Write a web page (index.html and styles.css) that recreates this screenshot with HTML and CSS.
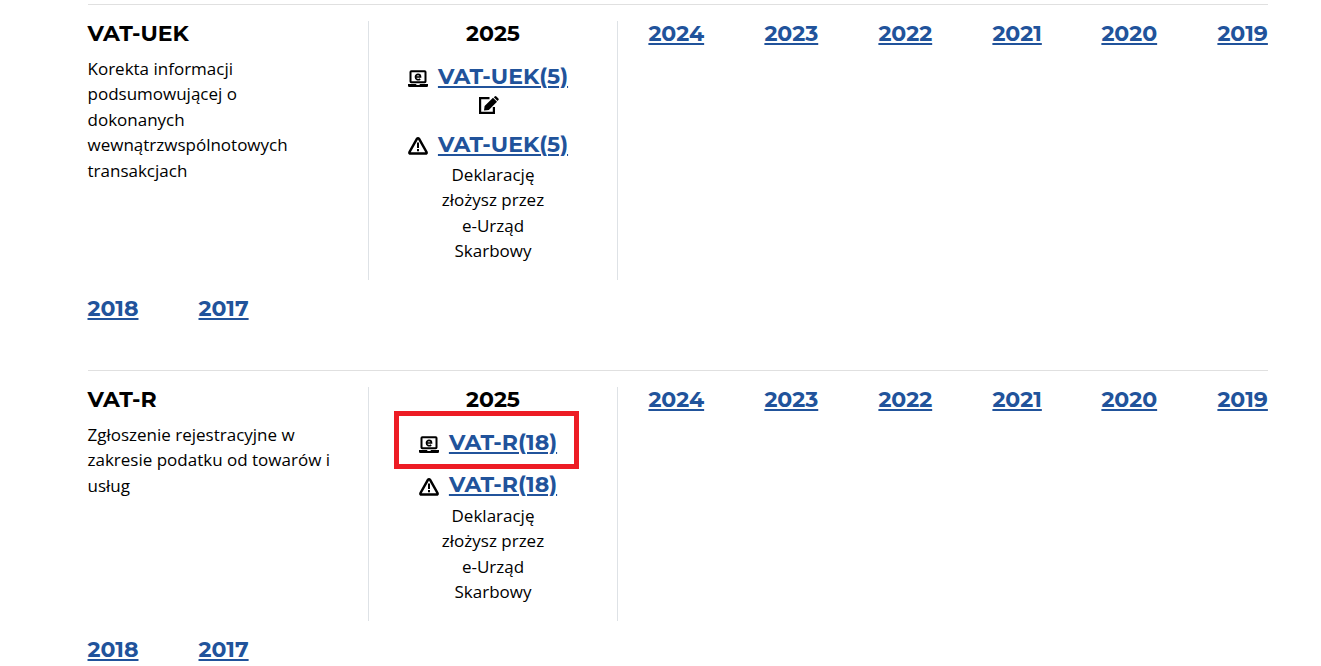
FILE: index.html
```html
<!DOCTYPE html>
<html lang="pl">
<head>
  <meta charset="UTF-8">
  <meta name="viewport" content="width=device-width, initial-scale=1.0">
  <title>Formularze VAT</title>
  <link rel="stylesheet" href="styles.css">
</head>
<body>
  <!-- Shared icons -->
  <svg class="sprite" aria-hidden="true">
    <symbol id="icon-laptop" viewBox="0 0 20 18">
      <rect x="2.500" y="1.300" width="15" height="11" rx=".8" fill="none" stroke="currentColor" stroke-width="2"/>
      <path d="M0 14h8l.6 1h2.800l.6-1h8v1.700q0 1.300-1.200 1.300H1.200Q0 17 0 15.700z" fill="currentColor"/>
      <path d="M7.500 7h5c0-3.400-5-3.400-5 0 0 3 3 3.300 4.700 2" fill="none" stroke="currentColor" stroke-width="1.700"/>
    </symbol>
    <symbol id="icon-warning" viewBox="0 0 20 18">
      <path d="M8.900 1.900Q10 .7 11.100 1.900L18.500 15q.5 1.600-1.100 1.600H2.600Q1 16.600 1.500 15z" fill="none" stroke="currentColor" stroke-width="2.500" stroke-linejoin="round"/>
      <path d="M9 5.500h2v5.500H9zM9 12h2v2.200H9z" fill="currentColor"/>
    </symbol>
    <symbol id="icon-edit" viewBox="0 0 20 18">
      <path d="M10.500 2.200H1.100v14.600h13.800V11" fill="none" stroke="currentColor" stroke-width="2.200"/>
      <path d="M5.600 10 14 1.800l4 3.900-8.200 8.200-4.800.7zM14.800 1.200 15.700.4q.8-.7 1.700 0l2 2q.7.800 0 1.600l-.9.900z" fill="currentColor"/>
    </symbol>
  </svg>

  <main class="forms">
    <section class="form-row">
      <div class="form-main">
        <div class="form-info">
          <h2>VAT-UEK</h2>
          <p>Korekta informacji podsumowującej o dokonanych wewnątrzwspólnotowych transakcjach</p>
        </div>
        <div class="form-current">
          <h3>2025</h3>
          <div class="form-entry">
            <svg class="icon icon-laptop"><use href="#icon-laptop"/></svg>
            <a href="#">VAT-UEK(5)</a>
          </div>
          <div class="form-edit"><svg class="icon"><use href="#icon-edit"/></svg></div>
          <div class="form-entry">
            <svg class="icon"><use href="#icon-warning"/></svg>
            <a href="#">VAT-UEK(5)</a>
          </div>
          <p class="note">Deklarację złożysz przez e-Urząd Skarbowy</p>
        </div>
        <nav class="years">
          <a href="#">2024</a>
          <a href="#">2023</a>
          <a href="#">2022</a>
          <a href="#">2021</a>
          <a href="#">2020</a>
          <a href="#">2019</a>
        </nav>
      </div>
      <nav class="years years-older">
        <a href="#">2018</a>
        <a href="#">2017</a>
      </nav>
    </section>

    <section class="form-row">
      <div class="form-main">
        <div class="form-info">
          <h2>VAT-R</h2>
          <p>Zgłoszenie rejestracyjne w zakresie podatku od towarów i usług</p>
        </div>
        <div class="form-current">
          <h3>2025</h3>
          <div class="form-entry marked">
            <svg class="icon icon-laptop"><use href="#icon-laptop"/></svg>
            <a href="#">VAT-R(18)</a>
          </div>
          <div class="form-entry">
            <svg class="icon"><use href="#icon-warning"/></svg>
            <a href="#">VAT-R(18)</a>
          </div>
          <p class="note">Deklarację złożysz przez e-Urząd Skarbowy</p>
        </div>
        <nav class="years">
          <a href="#">2024</a>
          <a href="#">2023</a>
          <a href="#">2022</a>
          <a href="#">2021</a>
          <a href="#">2020</a>
          <a href="#">2019</a>
        </nav>
      </div>
      <nav class="years years-older">
        <a href="#">2018</a>
        <a href="#">2017</a>
      </nav>
    </section>
  </main>
</body>
</html>
```
FILE: styles.css
```css
*,
*::after {
  box-sizing: border-box;
  margin: 0;
  padding: 0;
}

html,
body {
  height: 100%;
  overflow: hidden;
}

body {
  font-family: "Open Sans", Arial, sans-serif;
  font-size: 17px;
  line-height: 25.5px;
  color: #000;
  background-color: #fff;
}

.sprite {
  display: none;
}

.forms {
  width: 1180.5px;
  margin-left: 87.5px;
  padding-top: 4px;
}

.form-row {
  border-top: 1px solid #e0e0e0;
  padding: 16px 0 47px;
}

.form-row:last-child {
  padding-bottom: 0;
}

.form-main {
  display: grid;
  grid-template-columns: 280.5px 250px 1fr;
}

h2, h3, a {
  font-family: Montserrat, Inter, sans-serif;
  font-size: 22px;
  font-weight: 700;
  line-height: 29px;
}

h2, h3 {
  margin-top: -2px;
}

a {
  color: #21539b;
  text-decoration: underline;
  text-decoration-thickness: 2px;
  text-underline-offset: 2px;
  white-space: nowrap;
}

.form-info {
  padding-right: 30px;
}

.form-info h2 {
  margin-bottom: 7.5px;
}

.form-current {
  border-left: 1px solid #dee2e6;
  border-right: 1px solid #dee2e6;
  padding-bottom: 16.5px;
  text-align: center;
}

.form-current h3 {
  margin-bottom: 14px;
}

.form-entry {
  display: flex;
  justify-content: center;
  gap: 10px;
  position: relative;
  height: 29px;
  padding-right: 10px;
}

.form-entry + .form-entry,
.form-edit + .form-entry {
  margin-top: 13px;
}

.form-entry + .form-entry {
  height: 30px;
}

.form-entry .icon {
  margin-top: 7px;
}

.form-entry .icon-laptop,
.form-entry + .form-entry .icon {
  margin-top: 8px;
}

.form-edit {
  height: 26px;
  padding: 5px 9px 0 0;
}

.icon {
  display: inline-block;
  flex: none;
  width: 20px;
  height: 18px;
  vertical-align: top;
}

/* red frame around the highlighted form */
.marked::after {
  content: "";
  position: absolute;
  top: -17px;
  left: 25px;
  width: 185px;
  height: 58px;
  border: 5px solid #ed1c24;
}

.note {
  width: 110px;
  margin: 2.5px auto 0;
}

.years {
  display: grid;
  grid-template-columns: 56px 54px 54px 49px 56px 51px;
  column-gap: 60px;
  align-content: start;
  margin-top: -2px;
  padding-left: 30.4px;
}

.years-older {
  grid-template-columns: 51px 50px;
  margin-top: 14px;
  padding-left: 0;
}
```
